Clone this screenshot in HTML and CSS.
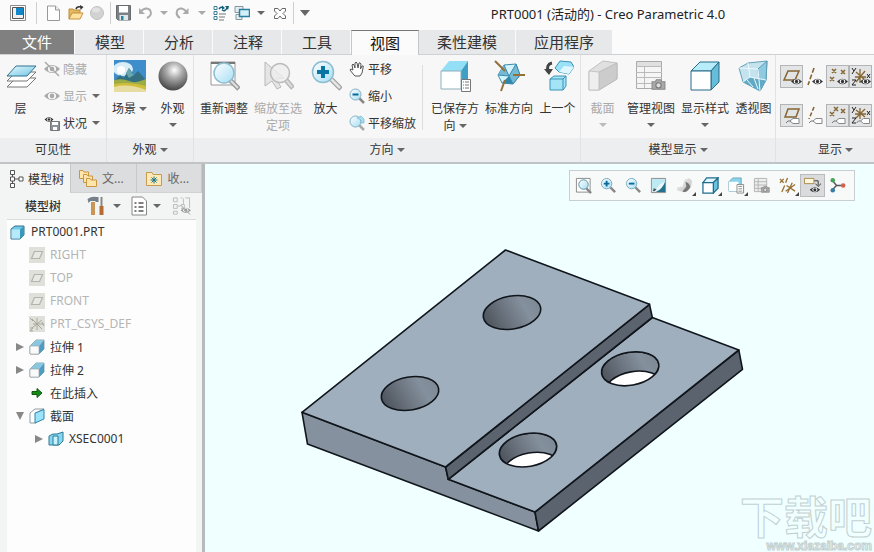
FILE: index.html
```html
<!DOCTYPE html>
<html lang="zh-CN">
<head>
  <meta charset="UTF-8">
  <meta name="viewport" content="width=device-width, initial-scale=1.0">
  <title>PRT0001 (活动的) - Creo Parametric 4.0</title>
  <link rel="stylesheet" href="styles.css">
</head>
<body>
  <!-- shared icon shapes -->
  <svg class="defs" width="0" height="0" aria-hidden="true">
    <defs>
      <linearGradient id="blue" x1="0" y1="0" x2="1" y2="1"><stop offset="0" stop-color="#e8faff"/><stop offset="1" stop-color="#6fc4e4"/></linearGradient>
      <linearGradient id="lens" x1="0" y1="0" x2="1" y2="1"><stop offset="0" stop-color="#ffffff"/><stop offset="1" stop-color="#a6def4"/></linearGradient>
      <linearGradient id="grey" x1="0" y1="0" x2="1" y2="1"><stop offset="0" stop-color="#f4f4f4"/><stop offset="1" stop-color="#bdbdbd"/></linearGradient>
      <linearGradient id="hole-fill" x1="0" x2="1" y1="0.4" y2="0.2"><stop offset="0" stop-color="#50565f"/><stop offset="0.35" stop-color="#6b747f"/><stop offset="0.7" stop-color="#84909d"/><stop offset="1" stop-color="#7d8894"/></linearGradient>
      <radialGradient id="ball" cx="0.55" cy="0.3" r="0.7"><stop offset="0" stop-color="#ffffff"/><stop offset="0.4" stop-color="#a9a9a9"/><stop offset="1" stop-color="#454545"/></radialGradient>
      <clipPath id="hole-clip"><ellipse rx="29" ry="16.5" transform="rotate(-10)"/></clipPath>
    </defs>
    <symbol id="eye" viewBox="0 0 16 16"><path d="M0 8Q8 0 16 8Q8 16 0 8Z" fill="currentColor"/><ellipse cx="8" cy="8" rx="4" ry="3.2" fill="#fff"/><circle cx="8" cy="8" r="2.4" fill="currentColor"/></symbol>
    <symbol id="plane" viewBox="0 0 16 16"><rect width="16" height="16" fill="#e0e0da"/><path d="M5.500 4.500H13.500L10.500 11.500H2.500Z" fill="#e8e8e4" stroke="#b4b4ae" stroke-width="1.200"/></symbol>
    <symbol id="extrude" viewBox="0 0 16 16"><path d="M1 7L7 1H15V10L10 15H1Z" fill="#b9d9e8" stroke="#8ba5b2"/><path d="M10 7L15 1V10L10 15Z" fill="#4d9cc3"/><path d="M1 7L7 1H15L10 7Z" fill="#8cc7e0"/><path d="M1 7H10V15H1Z" fill="#fafafa" stroke="#a0a8ac" stroke-width=".7"/></symbol>
    <symbol id="tag" viewBox="0 0 14 8"><path d="M4 4L7 1.500H13V6.500H7Z" fill="#fff" stroke="#888"/><path d="M0 6Q2 3 4 4" fill="none" stroke="#777"/></symbol>
    <symbol id="cam" viewBox="0 0 14 11"><path d="M1 3H4L5 1H9L10 3H13V10H1Z" fill="#a9a9a9" stroke="#888"/><circle cx="7" cy="6.300" r="2.500" fill="#ddd" stroke="#777"/></symbol>
  </svg>

  <header class="titlebar">
    <div class="quick-access">
      <button class="quick-btn" aria-label="窗口"><svg viewBox="0 0 16 16"><path d="M.5.500H15.500V15.500H.500Z" fill="#fff" stroke="#8a8a8a"/><path d="M2.500 2.500H13.500V13.500H2.500Z" fill="#eee" stroke="#555"/><path d="M6 3H13V10H6Z" fill="#1186c8"/></svg></button>
      <span class="quick-sep wide"></span>
      <button class="quick-btn" aria-label="新建"><svg viewBox="0 0 16 16"><path d="M.500 1H8.500L12.500 5V15.500H.500Z" fill="#fff" stroke="#999"/><path d="M8.500 1V5H12.500" fill="#eee" stroke="#999"/></svg></button>
      <button class="quick-btn" aria-label="打开"><svg viewBox="0 0 16 16"><path d="M1 14V4H5L6 5H12V8" fill="#e5b863" stroke="#bd8b39"/><path d="M1 14L4 8H15L12 14Z" fill="#ffe2a0" stroke="#c6913c"/><path d="M8 4Q9 1 13 2" fill="none" stroke="#333" stroke-width="1.500"/><path d="M12 0L15.500 2L12.500 5Z" fill="#333"/></svg></button>
      <button class="quick-btn" aria-label="连接"><svg viewBox="0 0 16 16"><circle cx="8" cy="8" r="6.500" fill="#d2d2d2" stroke="#c2c2c2"/><ellipse cx="7" cy="5" rx="4" ry="2.500" fill="#e2e2e2"/></svg></button>
      <span class="quick-sep"></span>
      <button class="quick-btn" aria-label="保存"><svg viewBox="0 0 16 16"><path d="M.500.500H14.500V15H2L.500 13.500Z" fill="#7d8286" stroke="#676b6e"/><path d="M3 1H12V7.500H3Z" fill="#fff"/><path d="M3.500 10H12V15H3.500Z" fill="#dfe9ec"/><path d="M5 11H7.500V15H5Z" fill="#2689a1"/></svg></button>
      <button class="quick-btn" aria-label="撤消"><svg viewBox="0 0 16 16"><path d="M3 7Q9 1 13 5Q16 10 10 13" fill="none" stroke="#aaa" stroke-width="2"/><path d="M2 3V9H8Z" fill="#aaa"/></svg></button>
      <button class="menu-arrow faded" aria-label="撤消列表"></button>
      <button class="quick-btn" aria-label="重做"><svg viewBox="0 0 16 16"><path d="M12 7Q6 1 2.500 5Q0 10 5 13" fill="none" stroke="#aaa" stroke-width="2"/><path d="M13.500 3V9H7.500Z" fill="#aaa"/></svg></button>
      <button class="menu-arrow faded" aria-label="重做列表"></button>
      <button class="quick-btn" aria-label="重新生成"><svg viewBox="0 0 16 16"><path d="M1 1.500H4V4.500H1ZM1 6.500H4V9.500H1ZM1 11.500H4V14.500H1Z" fill="#fff" stroke="#3c7e94"/><path d="M6 9H13M6 12H12M6 15H11" stroke="#777"/><path d="M6 4Q8 1 10 3M14 3Q12 7 9 5" fill="none" stroke="#135d78" stroke-width="1.500"/><path d="M9 .500V5L12 3ZM12 1L15 5L16 1Z" fill="#135d78"/></svg></button>
      <button class="quick-btn" aria-label="窗口列表"><svg viewBox="0 0 16 16"><path d="M1 1.500H9V7.500H1ZM2 9.500H8V14.500H2Z" fill="#e8eef0" stroke="#84979e"/><path d="M5.500 4.500H15.500V11.500H5.500Z" fill="#d4eff8" stroke="#287f9f" stroke-width="1.500"/></svg></button>
      <button class="menu-arrow" aria-label="窗口选项"></button>
      <button class="quick-btn" aria-label="关闭"><svg viewBox="0 0 16 16"><path d="M2.500 3.500H6L8 6L10 3.500H13.500V6L11 8.500L13.500 11V13.500H10L8 11L6 13.500H2.500V11L5 8.500L2.500 6Z" fill="#fff" stroke="#686868"/></svg></button>
      <span class="quick-sep"></span>
      <button class="menu-arrow large" aria-label="自定义快速访问工具栏"></button>
    </div>
    <h1 class="window-title">PRT0001 (活动的) - Creo Parametric 4.0</h1>
  </header>

  <nav class="tabs">
    <button class="tab file">文件</button>
    <button class="tab">模型</button>
    <button class="tab">分析</button>
    <button class="tab">注释</button>
    <button class="tab">工具</button>
    <button class="tab active">视图</button>
    <button class="tab long">柔性建模</button>
    <button class="tab long">应用程序</button>
  </nav>

  <section class="ribbon">
    <div class="group">
      <div class="group-body">
        <button class="big-btn narrow">
          <svg viewBox="0 0 32 32"><g stroke="#777" stroke-linejoin="round"><path d="M2 27L11 18H31L22 27Z" fill="#fff"/><path d="M2 21L11 12H31L22 21Z" fill="#fff"/><path d="M2 16L11 6H31L22 16Z" fill="url(#blue)" stroke="#30738e"/></g></svg>
          <span>层</span>
        </button>
        <div class="small-list">
          <button class="small-btn" disabled><svg viewBox="0 0 16 16"><use href="#eye"/><path d="M1 1L15 15" stroke="currentColor" stroke-width="1.500"/></svg>隐藏</button>
          <button class="small-btn" disabled><svg viewBox="0 0 16 16"><use href="#eye"/></svg>显示<i class="arrow side"></i></button>
          <button class="small-btn"><svg viewBox="0 0 16 16"><use href="#eye" width="10" height="9"/><path d="M6.500 6.500H15.500V15.500H6.500Z" fill="#8c9396" stroke="#73787b"/><path d="M8 7H14V10H8ZM9 12H13V15H9Z" fill="#fff"/></svg>状况<i class="arrow side"></i></button>
        </div>
      </div>
      <div class="group-label">可见性</div>
    </div>

    <div class="group">
      <div class="group-body">
        <button class="big-btn scene">
          <svg viewBox="0 0 32 32"><path d="M0 0H32V32H0Z" fill="#3d8ecb"/><ellipse cx="9" cy="9" rx="10" ry="7" fill="#d8edf8"/><circle cx="7" cy="10" r="4" fill="#fff"/><path d="M0 21L6 15L10 18L15 8L20 15L24 11L32 20V24H0Z" fill="#356f82"/><path d="M12 13L15 8L18 13L20 15L15 18Z" fill="#69a7af"/><path d="M0 20Q9 18 15 21T32 19V32H0Z" fill="#9aac45"/><path d="M0 24Q16 21 32 26V32H0Z" fill="#d0bd3c"/><path d="M0 27Q14 23 32 30V32H0Z" fill="#e8dda0"/></svg>
          <span>场景<i class="arrow"></i></span>
        </button>
        <button class="big-btn narrow">
          <svg viewBox="0 0 32 32"><circle cx="16" cy="16" r="14.500" fill="url(#ball)"/></svg>
          <span>外观</span><i class="arrow below"></i>
        </button>
      </div>
      <div class="group-label">外观<i class="arrow"></i></div>
    </div>

    <div class="group">
      <div class="group-body padded">
        <button class="big-btn">
          <svg viewBox="0 0 32 32"><path d="M3 2H27V25H3Z" fill="#fff" stroke="#999"/><path d="M3 2H27V4H3Z" fill="#777"/><path d="M22 20L31 29" stroke="#9c9c9c" stroke-width="5"/><path d="M22 20L30 28" stroke="#e0e0e0" stroke-width="2"/><circle cx="16" cy="13" r="10" fill="url(#lens)" stroke="#8dbdd0" stroke-width="1.500"/></svg>
          <span>重新调整</span>
        </button>
        <button class="big-btn" disabled>
          <svg viewBox="0 0 32 32"><path d="M3 2V26L10 21L15 29L19 27L14 19L22 18Z" fill="#e5e5e5" stroke="#b8b8b8"/><path d="M24 20L31 28" stroke="#b8b8b8" stroke-width="5"/><path d="M24 20L30 27" stroke="#ddd" stroke-width="2"/><circle cx="18" cy="13" r="9.500" fill="#eee" fill-opacity=".8" stroke="#bbb" stroke-width="1.500"/></svg>
          <span>缩放至选定项</span>
        </button>
        <button class="big-btn narrow">
          <svg viewBox="0 0 32 32"><path d="M21 19L31 29" stroke="#a1a1a1" stroke-width="5"/><path d="M21 19L30 28" stroke="#e5e5e5" stroke-width="2.500"/><circle cx="13" cy="12" r="10.500" fill="url(#lens)" stroke="#8dbdd0" stroke-width="1.500"/><path d="M11 6H15V10H19V14H15V18H11V14H7V10H11Z" fill="#0875a4"/></svg>
          <span>放大</span>
        </button>
        <div class="small-list zoom-list">
          <button class="small-btn"><svg viewBox="0 0 16 16"><path d="M5 14L1 9Q1 7 4 9L3 4Q4 2 5 4L6 7L6 2Q7 0 8 2L9 7L10 2Q11 1 12 3L11.500 8L13 5Q15 4 14 7L13 12L11 15H6Z" fill="#fff" stroke="#555"/></svg>平移</button>
          <button class="small-btn"><svg viewBox="0 0 16 16"><path d="M10 10L15 15" stroke="#888" stroke-width="2.500"/><circle cx="6.500" cy="6.500" r="5.500" fill="url(#lens)" stroke="#82b1c4"/><path d="M3.500 6.500H9.500" stroke="#086b99" stroke-width="2"/></svg>缩小</button>
          <button class="small-btn"><svg viewBox="0 0 16 16"><path d="M10 10L15 15" stroke="#aaa" stroke-width="2.500"/><circle cx="6.500" cy="6.500" r="5.500" fill="url(#lens)" stroke="#82b1c4"/><path d="M8 3L12 1L15 4V8H12V5Z" fill="#a9def0" stroke="#68b0cd" stroke-width=".6"/></svg>平移缩放</button>
        </div>
        <span class="divider"></span>
        <button class="big-btn">
          <svg viewBox="0 0 32 32"><path d="M2 11L10 1H29L22 11Z" fill="#93dff5"/><path d="M22 11L29 1V23L22 29Z" fill="#409fc5"/><path d="M2 11H22V29H2Z" fill="#fff" stroke="#8caebb"/><path d="M22.500 19.500H31.500V31.500H22.500Z" fill="#fff" stroke="#777"/><path d="M24 22H25M26 22H30M24 25H25M26 25H30M24 28H25M26 28H30" stroke="#777"/></svg>
          <span>已保存方<br>向<i class="arrow"></i></span>
        </button>
        <button class="big-btn">
          <svg viewBox="0 0 32 32"><path d="M5 15L11 5L23 4L27 15L20 24L9 23Z" fill="#d5f3fc" stroke="#378cae"/><path d="M11 5L16 16L5 15M16 16L23 4L27 15L20 24Z" fill="#75b9d4" stroke="#378cae"/><path d="M9 23L16 16L20 24Z" fill="#2e86a9"/><path d="M2 1L12 11M20 15H32M12 20L8 31" stroke="#94713b" stroke-width="2"/></svg>
          <span>标准方向</span>
        </button>
        <button class="big-btn back-btn">
          <svg viewBox="0 0 32 32"><path d="M13 8L18 1L29 2L32 7L27 14L17 12Z" fill="#9be1f7" stroke="#3a93b6"/><path d="M17 12L22 6L32 7L27 14Z" fill="#dff8ff"/><path d="M8 19L12 16H24V26L21 30H8Z" fill="#a4e4f7" stroke="#3a93b6"/><path d="M8 19H21V30M21 19L24 16" fill="none" stroke="#3a93b6"/><path d="M10 3Q4 4 6 12" fill="none" stroke="#444" stroke-width="3"/><path d="M2 9H11L7 15Z" fill="#444"/></svg>
          <span>上一个</span>
        </button>
      </div>
      <div class="group-label">方向<i class="arrow"></i></div>
    </div>

    <div class="group">
      <div class="group-body">
        <button class="big-btn back-btn" disabled>
          <svg viewBox="0 0 32 32"><path d="M2 11L16 1L30 3V19L12 30H2Z" fill="#e0e0e0" stroke="#c0c0c0"/><path d="M12 12L30 3V19L12 30Z" fill="#ccc" stroke="#bcbcbc"/><path d="M2 11L12 12V30H2Z" fill="#eee" stroke="#c5c5c5"/></svg>
          <span>截面</span><i class="arrow below"></i>
        </button>
        <button class="big-btn">
          <svg viewBox="0 0 32 32"><path d="M1.500 1.500H26.500V28.500H1.500Z" fill="#f5f5f5" stroke="#aaa"/><path d="M1 6.500H27M1 12.500H27M1 17.500H27M1 23.500H27M9.500 6V28" stroke="#bbb"/><path d="M2 2H26V6H2Z" fill="#e0e0e0"/><use href="#cam" x="16" y="18" width="15" height="13"/></svg>
          <span>管理视图</span><i class="arrow below"></i>
        </button>
        <button class="big-btn">
          <svg viewBox="0 0 32 32"><g stroke="#286b86" stroke-linejoin="round"><path d="M2 11L11 2H30L22 11Z" fill="#b7ecfa"/><path d="M22 11L30 2V22L22 30Z" fill="#67bcd9"/><path d="M2 11H22V30H2Z" fill="#fff"/></g></svg>
          <span>显示样式</span><i class="arrow below"></i>
        </button>
        <button class="big-btn back-btn">
          <svg viewBox="0 0 32 32"><path d="M1 8L10 3L29 1L28 20L22 31L5 22Z" fill="#c4e3ee" stroke="#65a1b8"/><path d="M20 9L29 1L28 20L22 31Z" fill="#8fcbe0" stroke="#5d9bb3"/><path d="M5 22L12 17L28 20L22 31Z" fill="#61a9c5"/><path d="M1 8L20 9L22 31M10 3L12 17L5 22M12 17L28 20M9 20L15 27M16 18L20 29" fill="none" stroke="#eefaff"/></svg>
          <span>透视图</span>
        </button>
      </div>
      <div class="group-label">模型显示<i class="arrow"></i></div>
    </div>

    <div class="group display-group">
      <div class="group-body toggles">
        <div class="toggle-row">
          <button class="toggle on" aria-label="平面显示"><svg viewBox="0 0 20 20"><path d="M6 4H17L13 13H2Z" fill="none" stroke="#856632" stroke-width="1.500"/><use href="#eye" x="9" y="9" width="11" height="11"/></svg></button>
          <button class="toggle" aria-label="轴显示"><svg viewBox="0 0 20 20"><path d="M9 1L3 18" stroke="#856632" stroke-width="1.600" stroke-dasharray="5 2"/><use href="#eye" x="7" y="9" width="11" height="11"/></svg></button>
          <button class="toggle on" aria-label="点显示"><svg viewBox="0 0 20 20"><path d="M4 2L8 6M8 2L4 6M13 3L17 7M17 3L13 7M2 10L6 14M6 10L2 14" stroke="#856632" stroke-width="1.500"/><use href="#eye" x="9" y="9" width="11" height="11"/></svg></button>
          <button class="toggle on" aria-label="坐标系显示"><svg viewBox="0 0 20 20"><path d="M9 2V16M5 15L14 4M5 5L14 13M4 10H15" stroke="#856632" stroke-width="1.300"/><path d="M1 1L3 4L5 1M3 4L1 7M1 13H5L1 18H5M16 7L19 11M19 7L16 11" fill="none" stroke="#222"/><use href="#eye" x="9" y="9" width="11" height="11"/></svg></button>
        </div>
        <div class="toggle-row">
          <button class="toggle on" aria-label="平面标记显示"><svg viewBox="0 0 20 20"><path d="M6 3H17L14 11H3Z" fill="none" stroke="#856632" stroke-width="1.500"/><use href="#tag" x="3" y="11" width="16" height="8"/></svg></button>
          <button class="toggle" aria-label="轴标记显示"><svg viewBox="0 0 20 20"><path d="M9 1L4 13" stroke="#856632" stroke-width="1.600" stroke-dasharray="4 2"/><use href="#tag" x="3" y="11" width="16" height="8"/></svg></button>
          <button class="toggle on" aria-label="点标记显示"><svg viewBox="0 0 20 20"><path d="M6 1L10 5M10 1L6 5M13 3L17 7M17 3L13 7M2 6L6 10M6 6L2 10" stroke="#856632" stroke-width="1.500"/><use href="#tag" x="3" y="11" width="16" height="8"/></svg></button>
          <button class="toggle on" aria-label="坐标系标记显示"><svg viewBox="0 0 20 20"><path d="M9 2V13M5 12L14 3M5 4L14 11M4 8H15" stroke="#856632" stroke-width="1.300"/><path d="M1 1L3 4L5 1M3 4L1 7M1 12H5L1 17H5M16 5L19 9M19 5L16 9" fill="none" stroke="#222"/><use href="#tag" x="5" y="11" width="15" height="8"/></svg></button>
        </div>
      </div>
      <div class="group-label">显示<i class="arrow"></i></div>
    </div>
  </section>

  <main class="workspace">
    <aside class="sidebar">
      <div class="side-tabs">
        <button class="side-tab active"><svg viewBox="0 0 16 18"><path d="M1.500.500H5.500V4.500H1.500ZM1.500 7H5.500V11H1.500ZM1.500 13.500H5.500V17.500H1.500ZM10 7H14V11H10Z" fill="#fff" stroke="#555"/><path d="M3.500 4.500V7M3.500 11V13.500M5.500 9H10" stroke="#555"/></svg>模型树</button>
        <button class="side-tab"><svg viewBox="0 0 18 18"><g fill="#ffe5a8" stroke="#c89545"><path d="M.500 1.500H4L5 3H9.500V9.500H.500Z"/><path d="M4.500 5.500H8L9 7H13.500V13.500H4.500Z"/><path d="M7.500 9.500H11L12 11H17.500V17.500H7.500Z"/></g></svg>文...</button>
        <button class="side-tab"><svg viewBox="0 0 18 18"><path d="M1.500 3.500H7L8 5.500H16.500V16.500H1.500Z" fill="#ffeab5" stroke="#c89b50"/><path d="M9 7.500V14.500M5.500 11H12.500M6.500 8.500L11.500 13.500M11.500 8.500L6.500 13.500" stroke="#17728a"/></svg>收...</button>
      </div>
      <div class="tree-bar">
        <h2>模型树</h2>
        <button class="tree-tool" aria-label="设置"><svg viewBox="0 0 18 20"><path d="M0 3Q4 0 9 1L11 1V6H8V5H3L1 7Z" fill="#777f88"/><path d="M3.500 6H7.500V19H3.500Z" fill="#c99655"/><path d="M13 1H15V10H13Z" fill="#888"/><path d="M12 10H16V19H12Z" fill="#b96a32"/></svg></button>
        <button class="menu-arrow" aria-label="设置选项"></button>
        <button class="tree-tool list" aria-label="显示"><svg viewBox="0 0 18 20"><path d="M1.500 1H12L16 5V19H1.500Z" fill="#fff" stroke="#888"/><path d="M4 7H6M8 7H13M4 11H6M8 11H13M4 15H6M8 15H13" stroke="#555" stroke-width="1.500"/></svg></button>
        <button class="menu-arrow" aria-label="显示选项"></button>
        <button class="tree-tool last" aria-label="过滤" disabled><svg viewBox="0 0 20 20"><path d="M1.500 1.500H5.500V5.500H1.500ZM1.500 8.500H5.500V12.500H1.500ZM1.500 15.500H5.500V18.500H1.500ZM9.500 8.500H13V12.500H9.500M9 1.500H11M14 1.500H19M18.500 2V12M6 10H9M12 2V8" fill="none" stroke="#bbb"/><g color="#999"><use href="#eye" x="9" y="9" width="11" height="11"/></g><path d="M9 9L19 19" stroke="#999"/></svg></button>
      </div>
      <ul class="tree">
        <li class="row root"><svg viewBox="0 0 16 16"><path d="M1 5L5 2H14V11L10 15H1Z" fill="#70cbe9" stroke="#34718a"/><path d="M1.500 5.500H10V14.500H1.500Z" fill="#b6eafb"/><path d="M10 5.500L14 2V11L10 15Z" fill="#379abd"/></svg>PRT0001.PRT</li>
        <li class="row dim"><svg><use href="#plane"/></svg>RIGHT</li>
        <li class="row dim"><svg><use href="#plane"/></svg>TOP</li>
        <li class="row dim"><svg><use href="#plane"/></svg>FRONT</li>
        <li class="row dim"><svg viewBox="0 0 16 16"><rect width="16" height="16" fill="#e0e0da"/><path d="M8 2V14M3 3L13 13M3 12L13 4M4 8H15M1 2L4 5M1 12H4L1 15H4M13 6L15 10" stroke="#aaa79a" fill="none"/></svg>PRT_CSYS_DEF</li>
        <li class="row"><i class="twist"></i><svg><use href="#extrude"/></svg>拉伸 1</li>
        <li class="row"><i class="twist"></i><svg><use href="#extrude"/></svg>拉伸 2</li>
        <li class="row"><svg viewBox="0 0 16 16"><path d="M3 6.500H8V3.500L13 8L8 12.500V9.500H3Z" fill="#168916" stroke="#0d5b0d"/></svg>在此插入</li>
        <li class="row"><i class="twist open"></i><svg viewBox="0 0 16 16"><path d="M1 5L6 1H15L7 5V15H1Z" fill="#fff" stroke="#8e9ca2"/><path d="M6 5L15 1.500V11L6 15Z" fill="#9ae3fa" stroke="#3186a9"/></svg>截面</li>
        <li class="row nested"><i class="twist"></i><svg viewBox="0 0 16 16"><path d="M1 5L5 3H9L15 1V10L11 14H1Z" fill="#87d8ef" stroke="#2c7896"/><path d="M5 5H10V14H5Z" fill="#c6f2fd" stroke="#2c7896"/></svg>XSEC0001</li>
      </ul>
    </aside>

    <section class="canvas">
      <svg class="model" viewBox="205 164 669 388" role="img" aria-label="PRT0001">
        <g stroke="#10151b" stroke-width="1.600" stroke-linejoin="round">
          <path d="M302 412.300L445.600 467L448.300 479.300L535 512L538.500 531L307.500 444Z" fill="#85919e"/>
          <path d="M535 512L738.800 350L742.500 369.300L538.500 531Z" fill="#5b636f"/>
          <path d="M448.300 479.300L652.300 317.500L738.800 350L535 512Z" fill="#a0afbe"/>
          <path d="M445.600 467L649.500 304.300L652.300 317.500L448.300 479.300Z" fill="#5b636f"/>
          <path d="M505.500 250L649.500 304.300L445.600 467L302 412.300Z" fill="#a0afbe"/>
          <g fill="url(#hole-fill)">
            <ellipse rx="29" ry="16.500" transform="translate(512 312.500) rotate(-10)"/>
            <ellipse rx="29" ry="16.500" transform="translate(410 393.500) rotate(-10)"/>
          </g>
          <!-- through holes show the background under the far rim -->
          <g id="through" transform="translate(630.200 368.800)">
            <g clip-path="url(#hole-clip)">
              <ellipse rx="29" ry="16.500" transform="rotate(-10)" fill="url(#hole-fill)"/>
              <ellipse rx="29" ry="16.500" transform="translate(3.500 19.300) rotate(-10)" fill="#fff"/>
            </g>
            <ellipse rx="29" ry="16.500" transform="rotate(-10)" fill="none"/>
          </g>
          <use href="#through" transform="translate(-102.200 81.200)"/>
        </g>
      </svg>

      <div class="view-toolbar">
        <button aria-label="重新调整"><svg viewBox="0 0 18 18"><path d="M1.500 1.500H16V16H1.500Z" fill="#fff" stroke="#888"/><path d="M12 12L17 17" stroke="#888" stroke-width="2.500"/><circle cx="9" cy="8" r="5" fill="url(#lens)" stroke="#588ba0"/></svg></button>
        <button aria-label="放大"><svg viewBox="0 0 18 18"><path d="M11 11L16 16" stroke="#888" stroke-width="2.500"/><circle cx="7" cy="7" r="5.500" fill="url(#lens)" stroke="#75a9bd"/><path d="M7 4V10M4 7H10" stroke="#086b99" stroke-width="2"/></svg></button>
        <button aria-label="缩小"><svg viewBox="0 0 18 18"><path d="M11 11L16 16" stroke="#888" stroke-width="2.500"/><circle cx="7" cy="7" r="5.500" fill="url(#lens)" stroke="#75a9bd"/><path d="M4 7H10" stroke="#086b99" stroke-width="2"/></svg></button>
        <button aria-label="重画"><svg viewBox="0 0 18 18"><path d="M1.500 1.500H16.500V16.500H1.500Z" fill="#e9f8fc" stroke="#888"/><path d="M2 2H16V5Q11 6 8 11Q6 14 2 15Z" fill="#bde9f5"/><path d="M16 5V16H6Q13 13 16 5Z" fill="#25718b"/><path d="M4 12L7 13L5 15H3Z" fill="#555"/></svg></button>
        <button class="has-menu" aria-label="渲染"><svg viewBox="0 0 18 18"><path d="M9 3L14 1L17 4L16 10Q12 17 8 16L1 14V11L7 10Z" fill="url(#grey)"/><path d="M10 5Q15 7 15 11Q10 18 7 15L11 10Z" fill="#777"/></svg></button>
        <button class="has-menu" aria-label="显示样式"><svg viewBox="0 0 18 18"><g stroke="#1e6a8b" stroke-width="1.300"><path d="M1 6L5 1H17L12 6Z" fill="#dff7ff"/><path d="M12 6L17 1V12L12 17Z" fill="#6bc3e2"/><path d="M1 6H12V17H1Z" fill="#fff"/></g></svg></button>
        <button class="has-menu" aria-label="已保存方向"><svg viewBox="0 0 18 18"><path d="M1 5L5 1H14V12L11 15H1Z" fill="#89d4ec" stroke="#70aabd"/><path d="M1 5H11V15H1Z" fill="#fff"/><path d="M9.500 8H16.500V17H9.500Z" fill="#fff" stroke="#888"/><path d="M11 10H15M11 12.500H15M11 15H15" stroke="#888"/></svg></button>
        <button aria-label="视图管理器"><svg viewBox="0 0 18 18"><path d="M1.500 1.500H14.500V15.500H1.500ZM1.500 5H14.500M1.500 8.500H14.500M1.500 12H14.500M5.500 2V15" fill="#eee" stroke="#b3b3b3"/><use href="#cam" x="8" y="9" width="10" height="8"/></svg></button>
        <button class="has-menu" aria-label="基准显示过滤器"><svg viewBox="0 0 18 18"><path d="M1 2L5 6M5 2L1 6M9 1L7 6M6 9L3 16M14 6L9 17M17 8L7 15M8 9L17 15" stroke="#987235" stroke-width="1.400"/></svg></button>
        <button class="pressed" aria-label="注释显示"><svg viewBox="0 0 18 18"><path d="M.500 1.500H10.500V7H.500Z" fill="#fff9dc" stroke="#aa8a51"/><path d="M11 4H15V9M12 7L15 10L18 7" fill="none" stroke="#333"/><use href="#eye" x="6" y="8" width="11" height="11"/></svg></button>
        <button aria-label="旋转中心"><svg viewBox="0 0 18 18"><path d="M3 3L8 9H15M8 9L3 14" fill="none" stroke="#555" stroke-width="1.500"/><circle cx="4" cy="3.500" r="2.400" fill="#45a35a"/><circle cx="15" cy="9" r="2.400" fill="#d5614d"/><circle cx="4" cy="14" r="2.400" fill="#397da4"/></svg></button>
      </div>

      <div class="watermark">
        <span class="mark-name">下载吧</span>
        <span class="mark-url">www.xiazaiba.com</span>
      </div>
    </section>
  </main>
</body>
</html>
```

FILE: styles.css
```css
* {
  box-sizing: border-box;
}

body {
  margin: 0;
  height: 100vh;
  display: flex;
  flex-direction: column;
  overflow: hidden;
  font-family: "Noto Sans", "Noto Sans CJK SC", sans-serif;
  font-size: 12px;
  color: #333;
  background-color: #fbfbfb;
}

button {
  font: inherit;
  color: inherit;
  background: none;
  border: none;
  padding: 0;
  margin: 0;
}

svg {
  display: block;
  flex: none;
}

.defs {
  position: absolute;
}

/* title bar */
.titlebar {
  display: flex;
  align-items: center;
  height: 30px;
  flex: none;
  padding-bottom: 4px;
}

.quick-access {
  display: flex;
  align-items: center;
  gap: 5px;
  padding: 0 31px 0 10px;
}

.quick-btn svg {
  width: 16px;
  height: 16px;
}

.quick-sep {
  width: 1px;
  height: 22px;
  background-color: #cfcfcf;
}

.quick-sep.wide {
  margin: 0 5px;
}

.menu-arrow {
  width: 12px;
  height: 16px;
  display: flex;
  align-items: center;
  justify-content: center;
}

.menu-arrow::before,
.arrow {
  content: '';
  display: inline-block;
  border: solid transparent;
  border-width: 4px 4px 0;
  border-top-color: #666;
}

.menu-arrow.faded::before {
  border-top-color: #aaa;
}

.menu-arrow.large::before {
  border-width: 6px 5px 0;
}

.window-title {
  flex: 1;
  margin: 0;
  font-size: 13px;
  font-weight: normal;
  text-align: center;
  color: #222;
}

/* ribbon tabs */
.tabs {
  display: flex;
  height: 25px;
  flex: none;
  border-bottom: 1px solid #cfd2d4;
}

.tab {
  height: 24px;
  padding: 0 18px 0 20px;
  border-right: 1px solid #fbfbfb;
  background-color: #e6e8ea;
  font-size: 15px;
  line-height: 22px;
}

.tab.long {
  padding: 0 18px;
}

.tab.file {
  padding: 0 22px;
  background-color: #808080;
  color: #fff;
}

.tab.active {
  height: 25px;
  padding: 0 18px;
  line-height: 21px;
  background-color: #fbfbfb;
  border: 1px solid #c4c6c8;
  border-top-color: #777;
  border-bottom: none;
  color: #111;
}

/* ribbon */
.ribbon {
  display: flex;
  flex: none;
  overflow: hidden;
  background-color: #f7f7f7;
  border-bottom: 2px solid #c0c4c6;
}

.group {
  display: flex;
  flex-direction: column;
  flex: none;
  border-right: 1px solid #e0e2e4;
}

.group-body {
  display: flex;
  height: 83px;
}

.group-body.padded {
  padding: 0 1px 0 3px;
}

.group-label {
  height: 24px;
  line-height: 24px;
  text-align: center;
  background-color: #eceef0;
}

.arrow {
  margin-left: 3px;
  vertical-align: 2px;
}

.big-btn {
  display: flex;
  flex-direction: column;
  align-items: center;
  width: 54px;
  padding-top: 5px;
  line-height: 17px;
}

.big-btn svg {
  width: 32px;
  height: 32px;
  margin-bottom: 8px;
}

.big-btn span {
  max-width: 50px;
}

.big-btn.narrow {
  width: 41px;
}

.big-btn.scene {
  width: 45px;
}

.big-btn.back-btn {
  width: 43px;
}

.arrow.below {
  margin: 6px 0 0;
}

button:disabled {
  color: #aaa;
}

button:disabled .arrow.below {
  border-top-color: #bbb;
}

.small-list {
  padding: 0 6px 0 3px;
}

.small-btn {
  display: flex;
  align-items: center;
  height: 27px;
}

.small-btn svg {
  width: 16px;
  height: 16px;
  margin-right: 3px;
}

.arrow.side {
  margin-left: 5px;
}

.zoom-list {
  padding: 0 6px 0 3px;
}

.divider {
  width: 1px;
  margin: 10px 5px 8px 0;
  background-color: #ddd;
}

.display-group {
  width: 120px;
}

.toggles {
  flex-direction: column;
  gap: 16px;
  padding: 10px 0 0 4px;
}

.toggle-row {
  display: flex;
}

.toggle {
  width: 23px;
  height: 23px;
  display: grid;
  place-items: center;
}

.toggle.on {
  background-color: #e2e4e6;
  border: 1px solid #b2b4b6;
}

.toggle svg {
  width: 20px;
  height: 20px;
}

/* model tree */
.workspace {
  display: flex;
  flex: 1;
  min-height: 0;
}

.sidebar {
  width: 205px;
  flex: none;
  display: flex;
  flex-direction: column;
  background-color: #f3f4f4;
  border-right: 3px solid #b6babc;
}

.side-tabs {
  display: flex;
  height: 29px;
}

.side-tab {
  display: flex;
  align-items: center;
  gap: 5px;
  flex: 1;
  padding-left: 8px;
  color: #666;
  background-color: #dcdddf;
  border-right: 1px solid #c6c8ca;
  border-bottom: 1px solid #d0d2d4;
}

.side-tab.active {
  flex: none;
  width: 71px;
  gap: 2px;
  background-color: #f3f4f4;
  border-bottom: none;
  color: #333;
}

.side-tab svg {
  width: 18px;
  height: 18px;
}

.tree-bar {
  display: flex;
  align-items: center;
  height: 26px;
  padding: 0 9px 0 25px;
}

.tree-bar h2 {
  margin: 0 26px 0 0;
  font-size: 12px;
  font-weight: 500;
}

.tree-tool svg {
  width: 19px;
  height: 20px;
}

.tree-tool + .menu-arrow {
  margin-left: 5px;
}

.tree-tool.list {
  margin-left: 7px;
}

.tree-bar .list + .menu-arrow {
  margin-left: 2px;
}

.tree-tool.last {
  margin-left: 9px;
}

.tree {
  flex: 1;
  margin: 0 6px 0 7px;
  padding: 0;
  list-style: none;
  background-color: #fdfdfd;
  border-top: 1px solid #d9dbdc;
}

.row {
  display: flex;
  align-items: center;
  height: 23px;
  padding-left: 22px;
}

.row svg {
  width: 16px;
  height: 16px;
  margin-right: 5px;
}

.row.root {
  padding-left: 3px;
}

.row.dim {
  color: #b5b5b5;
}

.row.nested {
  padding-left: 41px;
}

.twist {
  width: 8px;
  margin: 0 5px 0 -13px;
  border: solid transparent;
  border-width: 4px 0 4px 8px;
  border-left-color: #888;
}

.twist.open {
  border-width: 8px 4px 0;
  border-color: #888 transparent transparent;
}

/* graphics area */
.canvas {
  position: relative;
  flex: 1;
  min-width: 0;
  overflow: hidden;
  background-color: #f0ffff;
}

.model {
  width: 100%;
  height: 100%;
}

.view-toolbar {
  position: absolute;
  top: 6px;
  right: 19px;
  display: flex;
  align-items: center;
  height: 31px;
  padding: 0 4px 0 1px;
  background-color: #f8f9f9;
  border: 1px solid #c9cfd0;
}

.view-toolbar button {
  position: relative;
  width: 25px;
  height: 23px;
  display: grid;
  place-items: center;
}

.view-toolbar svg {
  width: 17px;
  height: 17px;
}

.view-toolbar .has-menu {
  width: 26px;
}

.has-menu::after {
  content: '';
  position: absolute;
  right: 1px;
  bottom: 1px;
  border: 2px solid;
  border-color: transparent #444 #444 transparent;
}

.view-toolbar .pressed {
  background-color: #d9dbdd;
  border: 1px solid #b9bbbd;
}

.watermark {
  position: absolute;
  right: 2px;
  bottom: 0;
  display: flex;
  flex-direction: column;
  align-items: flex-end;
  color: #f0ffff;
  font-weight: bold;
  -webkit-text-stroke: 1px #c3d0d0;
}

.mark-name {
  font-family: "Noto Sans CJK SC", sans-serif;
  font-size: 44px;
  line-height: 50px;
}

.mark-url {
  font-family: "Liberation Sans", sans-serif;
  font-size: 12px;
  line-height: 12px;
}
```
